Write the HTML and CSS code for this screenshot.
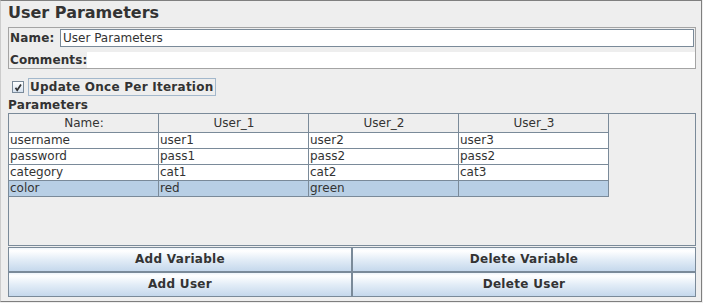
FILE: index.html
```html
<!DOCTYPE html>
<html lang="en">
<head>
    <meta charset="UTF-8">
    <title>User Parameters</title>
    <link rel="stylesheet" href="styles.css">
</head>
<body>
    <div class="frame">
        <!-- Title -->
        <div class="title">User Parameters</div>

        <!-- Name / Comments -->
        <div class="info">
            <div class="info-row name-row">
                <span class="lbl name-lbl">Name:</span>
                <div class="field">User Parameters</div>
            </div>
            <div class="info-row comments-row">
                <span class="lbl">Comments:</span>
                <div class="comments"></div>
            </div>
        </div>

        <!-- Checkbox -->
        <div class="check-row">
            <span class="box">
                <svg width="10" height="10" viewBox="0 0 10 10">
                    <polyline points="2.5,5.8 4.2,8.3 8,2.5" fill="none" stroke="#333" stroke-width="1.7"/>
                </svg>
            </span>
            <span class="check-label">Update Once Per Iteration</span>
        </div>

        <div class="section">Parameters</div>

        <!-- Parameters table -->
        <div class="scroll">
            <table class="params">
                <thead>
                    <tr><th>Name:</th><th>User_1</th><th>User_2</th><th>User_3</th></tr>
                </thead>
                <tbody>
                    <tr><td>username</td><td>user1</td><td>user2</td><td>user3</td></tr>
                    <tr><td>password</td><td>pass1</td><td>pass2</td><td>pass2</td></tr>
                    <tr><td>category</td><td>cat1</td><td>cat2</td><td>cat3</td></tr>
                    <tr class="selected"><td>color</td><td>red</td><td>green</td><td></td></tr>
                </tbody>
            </table>
        </div>

        <!-- Buttons -->
        <div class="buttons">
            <button>Add Variable</button>
            <button>Delete Variable</button>
            <button>Add User</button>
            <button>Delete User</button>
        </div>
    </div>
</body>
</html>
```

FILE: styles.css
```css
/* General */
body {
    margin: 0;
    background-color: #eeeeee;
    font-family: "DejaVu Sans", sans-serif;
    font-size: 12px;
    color: #333333;
}
.frame {
    box-sizing: border-box;
    width: 702px;
    height: 302px;
    padding: 0 5px 0 7px;
    border-top: 1px solid #7f7f7f;
    border-right: 1px solid #7f7f7f;
    border-bottom: 1px solid #7f7f7f;
    border-left: 1px solid #cccccc;
    background-color: #eeeeee;
}
.title {
    font-size: 16px;
    font-weight: bold;
    line-height: 19px;
    margin: 2px 0 5px 0;
}

/* Name / Comments panel */
.info {
    box-sizing: border-box;
    height: 42px;
    border: 1px solid #a4a4a4;
    padding: 0 1px 0 1px;
}
.info-row {
    display: flex;
}
.lbl {
    font-weight: bold;
    letter-spacing: 0.2px;
}
.name-row {
    margin-top: 1px;
    height: 18px;
    align-items: center;
}
.name-lbl {
    width: 50px;
}
.field {
    flex: 1;
    box-sizing: border-box;
    height: 18px;
    line-height: 16px;
    padding-left: 2px;
    border: 1px solid #7a8a99;
    background-color: #fff;
}
.comments-row {
    height: 21px;
    align-items: flex-end;
}
.comments-row .lbl {
    line-height: 16px;
    letter-spacing: 0.1px;
}
.comments {
    flex: 1;
    height: 16px;
    margin-right: -1px;
    background-color: #fff;
}

/* Checkbox */
.check-row {
    display: flex;
    align-items: center;
    height: 18px;
    margin-top: 9px;
    padding-left: 4px;
}
.box {
    box-sizing: border-box;
    width: 12px;
    height: 12px;
    margin-right: 4px;
    border: 1px solid #7a8a99;
    background: linear-gradient(#ffffff, #d6e2ef);
    display: flex;
}
.check-label {
    font-weight: bold;
    letter-spacing: 0.25px;
    line-height: 16px;
    padding: 0 1px;
    border: 1px solid #a3b8cc;
}
.section {
    font-weight: bold;
    letter-spacing: 0.2px;
    line-height: 14px;
    margin: 2px 0 1px 0;
}

/* Table */
.scroll {
    box-sizing: border-box;
    height: 133px;
    border: 1px solid #7a8a99;
    background-color: #eeeeee;
}
.params {
    border-collapse: separate;
    border-spacing: 0;
    table-layout: fixed;
    width: 600px;
}
.params th, .params td {
    box-sizing: border-box;
    width: 150px;
    padding: 0 0 0 1px;
    border-right: 1px solid #7a8a99;
    border-bottom: 1px solid #7a8a99;
    font-weight: normal;
    white-space: nowrap;
}
.params th {
    text-align: center;
    line-height: 18px;
    background-color: #eeeeee;
}
.params td {
    line-height: 15px;
    background-color: #fff;
}
.params tr.selected td {
    background-color: #b8cfe5;
}

/* Buttons */
.buttons {
    display: grid;
    grid-template-columns: 1fr 1fr;
    margin-top: 1px;
}
.buttons button {
    height: 25px;
    margin: 0;
    padding: 0;
    border: 1px solid #7a8a99;
    background: linear-gradient(#eef4fa 0%, #ffffff 12%, #e3edf7 50%, #c5d8ec 100%);
    font-family: "DejaVu Sans", sans-serif;
    font-size: 12px;
    font-weight: bold;
    letter-spacing: 0.3px;
    color: #333333;
    line-height: 23px;
}
```
